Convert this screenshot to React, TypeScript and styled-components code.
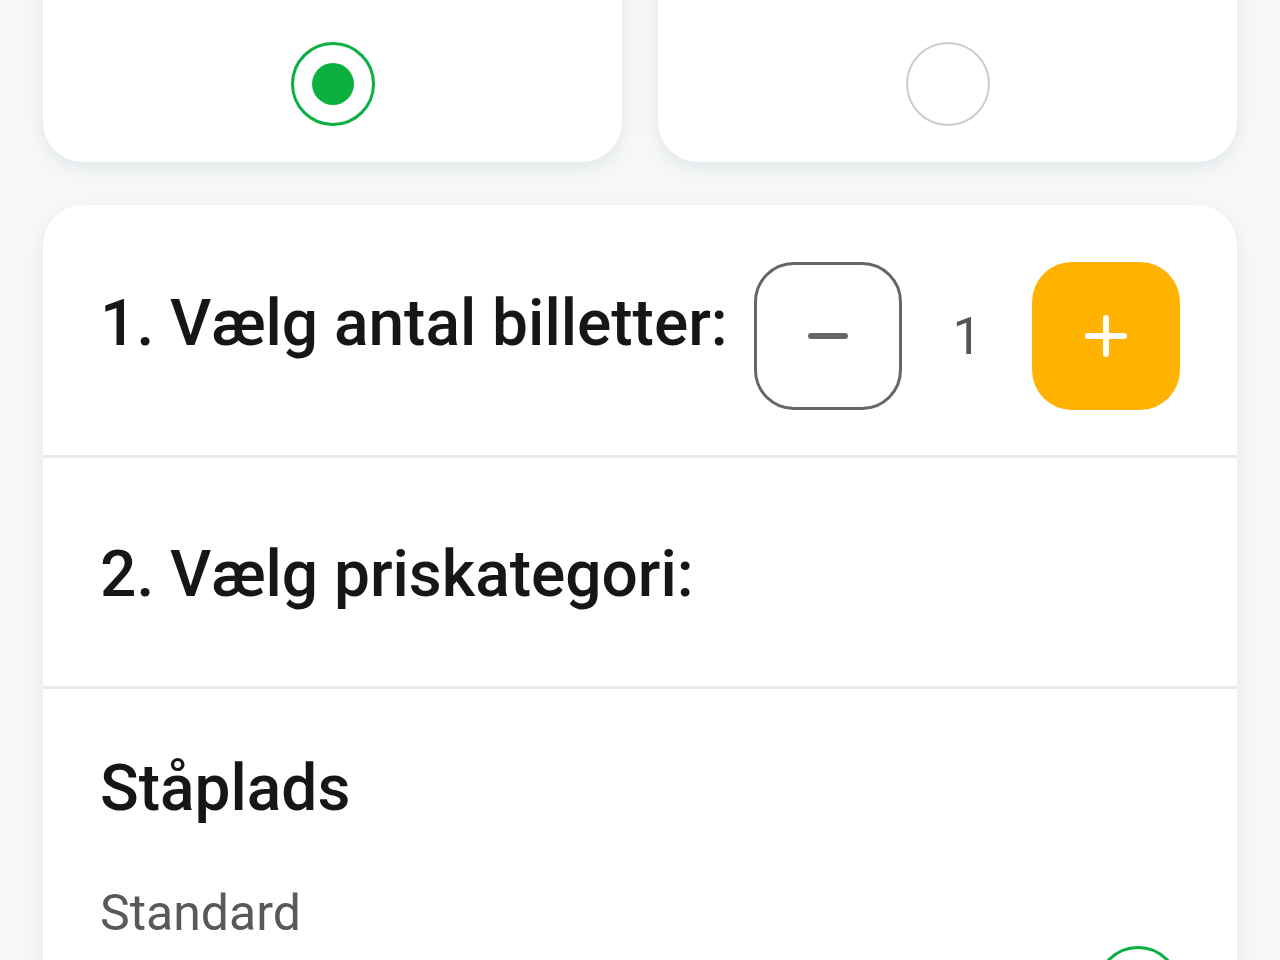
import styled, { createGlobalStyle } from 'styled-components';

const GlobalStyle = createGlobalStyle`
  html, body {
    margin: 0;
    padding: 0;
    height: 960px;
    background: #f5f7f8;
    font-family: Roboto, "Noto Sans", Arial, sans-serif;
    overflow: hidden;
  }
`;

const Page = styled.div`
  width: 1280px;
  padding: 0 43px;
  box-sizing: border-box;
`;

const OptionGrid = styled.div`
  display: grid;
  grid-template-columns: 1fr 1fr;
  gap: 36px;
  margin-top: -60px;
`;

const OptionCard = styled.div`
  background: #ffffff;
  border-radius: 40px;
  height: 222px;
  box-shadow: 0 6px 18px rgba(20, 40, 60, 0.07);
  display: flex;
  align-items: flex-end;
  justify-content: center;
  padding-bottom: 36px;
  box-sizing: border-box;
`;

const Radio = styled.div<{ $checked?: boolean }>`
  width: 84px;
  height: 84px;
  border-radius: 50%;
  box-sizing: border-box;
  border: ${(p) => (p.$checked ? '3px solid #0bb03f' : '2.5px solid #cccccc')};
  display: flex;
  align-items: center;
  justify-content: center;
  flex-shrink: 0;

  &::after {
    content: '';
    display: ${(p) => (p.$checked ? 'block' : 'none')};
    width: 42px;
    height: 42px;
    border-radius: 50%;
    background: #0bb03f;
  }
`;

const MainCard = styled.div`
  margin-top: 43px;
  background: #ffffff;
  border-radius: 40px 40px 0 0;
  box-shadow: 0 6px 18px rgba(20, 40, 60, 0.07);
`;

const Section = styled.div<{ $pt: number; $pb: number }>`
  padding: ${(p) => p.$pt}px 57px ${(p) => p.$pb}px 57px;
  border-bottom: 3px solid #e7e9eb;
  &:last-child {
    border-bottom: none;
  }
`;

const Row = styled.div`
  display: flex;
  align-items: center;
  justify-content: space-between;
`;

const Title = styled.h2<{ $lift?: number }>`
  margin: 0 0 ${(p) => p.$lift ?? 0}px 0;
  font-size: 64px;
  line-height: 72px;
  font-weight: 500;
  color: #161616;
  white-space: nowrap;
`;

const Stepper = styled.div`
  display: flex;
  align-items: center;
`;

const StepButton = styled.button<{ $primary?: boolean }>`
  width: 148px;
  height: 148px;
  border-radius: 40px;
  box-sizing: border-box;
  border: ${(p) => (p.$primary ? 'none' : '3px solid #666666')};
  background: ${(p) => (p.$primary ? '#ffb300' : '#ffffff')};
  display: flex;
  align-items: center;
  justify-content: center;
  padding: 0;
`;

const Count = styled.span`
  width: 130px;
  text-align: center;
  font-size: 52px;
  font-weight: 400;
  color: #555555;
`;

const Category = styled.h3`
  margin: 0;
  font-size: 64px;
  line-height: 72px;
  font-weight: 500;
  color: #161616;
`;

const PriceRow = styled.div`
  display: flex;
  justify-content: space-between;
  align-items: flex-start;
  margin-top: 58px;
`;

const PriceLabel = styled.div`
  font-size: 50px;
  line-height: 60px;
  color: #595959;
`;

const PriceRadio = styled.div`
  margin-top: 63px;
`;

const MinusIcon = () => (
  <svg width="44" height="44" viewBox="0 0 44 44">
    <line x1="5" y1="22" x2="39" y2="22" stroke="#666" strokeWidth="6" strokeLinecap="round" />
  </svg>
);

const PlusIcon = () => (
  <svg width="44" height="44" viewBox="0 0 44 44">
    <line x1="4" y1="22" x2="40" y2="22" stroke="#fff" strokeWidth="6" strokeLinecap="round" />
    <line x1="22" y1="4" x2="22" y2="40" stroke="#fff" strokeWidth="6" strokeLinecap="round" />
  </svg>
);

export default function App() {
  return (
    <>
      <GlobalStyle />
      <Page>
        <OptionGrid>
          <OptionCard>
            <Radio $checked />
          </OptionCard>
          <OptionCard>
            <Radio />
          </OptionCard>
        </OptionGrid>
        <MainCard>
          <Section $pt={57} $pb={45}>
            <Row>
              <Title $lift={24}>1. Vælg antal billetter:</Title>
              <Stepper>
                <StepButton aria-label="Fjern billet">
                  <MinusIcon />
                </StepButton>
                <Count>1</Count>
                <StepButton $primary aria-label="Tilføj billet">
                  <PlusIcon />
                </StepButton>
              </Stepper>
            </Row>
          </Section>
          <Section $pt={81} $pb={75}>
            <Title>2. Vælg priskategori:</Title>
          </Section>
          <Section $pt={64} $pb={40}>
            <Category>Ståplads</Category>
            <PriceRow>
              <PriceLabel>Standard</PriceLabel>
              <PriceRadio>
                <Radio $checked />
              </PriceRadio>
            </PriceRow>
          </Section>
        </MainCard>
      </Page>
    </>
  );
}
